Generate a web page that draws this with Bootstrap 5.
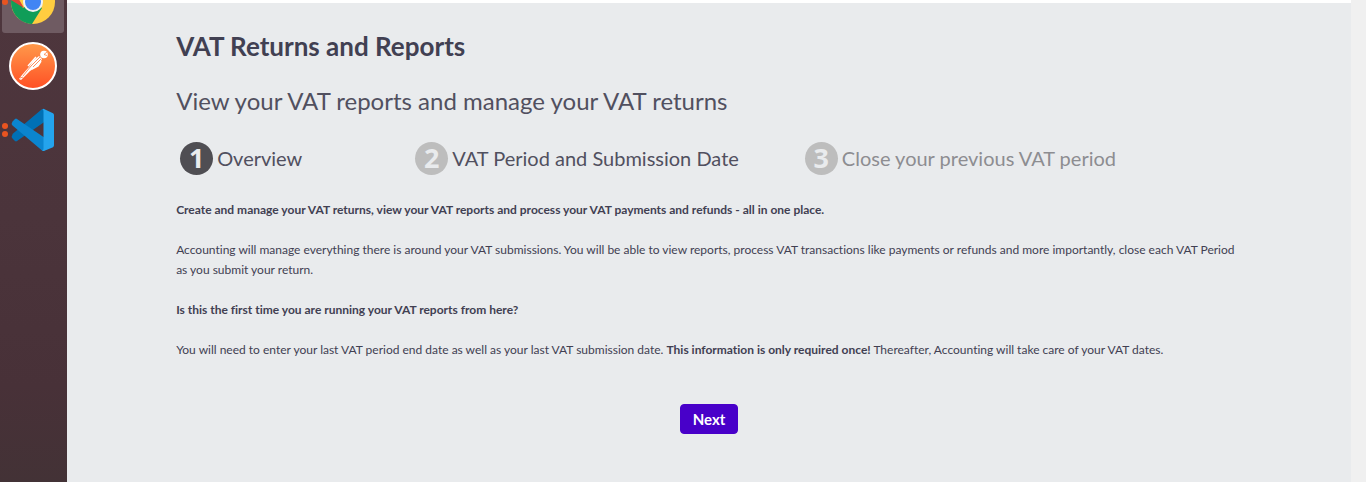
<!DOCTYPE html>
<html lang="en">
<head>
<meta charset="utf-8">
<meta name="viewport" content="width=device-width, initial-scale=1">
<title>VAT Returns and Reports</title>
<link href="https://cdn.jsdelivr.net/npm/bootstrap@5.3.0/dist/css/bootstrap.min.css" rel="stylesheet">
<script src="https://cdn.jsdelivr.net/npm/bootstrap@5.3.0/dist/js/bootstrap.bundle.min.js" defer></script>
<style>
body { font-family: Lato, "Liberation Sans", sans-serif; font-size: 12px; line-height: 20px; font-variant-ligatures: none; color: #414052; background: #e9ebed; }
.dock { width: 67px; background: linear-gradient(#4e363d, #4b343b 45%, #483138 80%, #433236); }
.dock button { display: block; width: 67px; padding: 0; border: 0; background: none; }
.dock svg { display: block; }
.page-area { border-top: 3px solid #fff; }
.wizard { width: 83%; padding-top: 27px; }
.gutter-strip { width: 15px; background: #f0f0f0; }
h1 { font-size: 26px; line-height: 32px; font-weight: 700; margin-bottom: 24px; }
h2 { font-size: 24px; line-height: 30px; font-weight: 400; color: #51505f; margin-bottom: 24px; }
.steps { font-size: 20px; line-height: 36px; color: #51505f; gap: 66px; padding-left: 4px; margin-bottom: 24px; }
.steps li { gap: 4px; }
.step-no { width: 33px; height: 33px; background: #bdbdbd; color: #e9ebed; font: 700 27px/31px "Open Sans", "Noto Sans", sans-serif; }
.current .step-no { background: #4f4e53; }
.current { margin-right: 47px; }
.later { color: #8d8d91; }
.wizard p { margin-bottom: 20px; }
.btn-next { --bs-btn-color: #fff; --bs-btn-bg: #4800c9; --bs-btn-border-color: #4800c9; --bs-btn-hover-color: #fff; --bs-btn-hover-bg: #3b00a6; --bs-btn-padding-x: 12px; --bs-btn-padding-y: 4px; --bs-btn-font-size: 15px; --bs-btn-line-height: 20px; --bs-btn-font-weight: 700; --bs-btn-border-radius: 4px; margin-top: 24px; }
</style>
</head>
<body>
<div class="d-flex min-vh-100">
  <nav class="dock flex-shrink-0" aria-label="Applications">
    <button type="button" aria-label="Chrome">
      <svg width="67" height="34" viewBox="0 0 67 34">
        <rect x="2" y="-20" width="62" height="53" rx="3" fill="#6f5b62"/>
        <circle cx="33" cy="2" r="22" fill="#ffcd40"/>
        <path d="M33 2 23 8 14 -9A22 22 0 0 0 32 24L42 8Z" fill="#109d58"/>
        <path d="M11 0A22 22 0 0 1 14 -9L24 8Z" fill="#db4437"/>
        <circle cx="33" cy="2" r="10" fill="#f1f1f1"/>
        <circle cx="33" cy="2" r="8" fill="#4285f4"/>
        <circle cx="5" cy="2" r="3" fill="#e95420"/>
      </svg>
    </button>
    <button type="button" aria-label="Postman">
      <svg width="67" height="64" viewBox="0 34 67 64">
        <defs><linearGradient id="orange" x1="0" y1="0" x2="0" y2="1"><stop offset="0" stop-color="#ff9a4b"/><stop offset="1" stop-color="#ff4f24"/></linearGradient></defs>
        <circle cx="33" cy="66" r="23" fill="url(#orange)" stroke="#fff" stroke-width="2"/>
        <circle cx="44" cy="54.500" r="3.800" fill="#fff"/>
        <path d="M44 54.500 47 52M44 54.500l3 1" stroke="#ff8240" stroke-width=".8"/>
        <path d="m39 56 3 3-3 6-9 6-9 9-2-1 3-4 7-8 4-6Z" fill="#fff"/>
        <path d="m40 57-9 9-8 10M41 59l-8 8M36 57l-8 8M20 78l3-1" fill="none" stroke="#ff7338" stroke-width=".8"/>
        <path d="m36 57-8 9M41 61l-3 5-6 3" fill="none" stroke="#fff" stroke-width="1.500"/>
      </svg>
    </button>
    <button type="button" aria-label="Visual Studio Code">
      <svg width="67" height="64" viewBox="0 98 67 64">
        <path d="m12.500 134 29-24.500q1.500-.8 3.500 0v12L17 141q-1 .8-2 0l-2.500-2.500q-1.500-2 0-4Z" fill="#0070b5"/>
        <path d="m12.500 125.500 29.500 25q1.500.8 3-.5v-12L17 119q-1-.8-2 0l-2.500 2.500q-1.500 2 0 4Z" fill="#0b85cf"/>
        <path d="M42.500 109.200q.8-.7 2 0l8.500 4q1 .6 1 2v30q0 1.200-1 2l-8.500 3.600q-1.200.6-2.500-.1 1.500-.2 1.500-2.200v-37q0-1.800-1-2.300Z" fill="#24a4ed"/>
        <circle cx="5" cy="126" r="3" fill="#e95420"/><circle cx="5" cy="134" r="3" fill="#e95420"/>
      </svg>
    </button>
  </nav>
  <main class="page-area flex-grow-1">
    <div class="wizard mx-auto">
      <h1>VAT Returns and Reports</h1>
      <h2>View your VAT reports and manage your VAT returns</h2>
      <ol class="steps list-unstyled d-flex">
        <li class="current d-flex align-items-center"><span class="step-no rounded-circle text-center">1</span>Overview</li>
        <li class="d-flex align-items-center"><span class="step-no rounded-circle text-center">2</span>VAT Period and Submission Date</li>
        <li class="later d-flex align-items-center"><span class="step-no rounded-circle text-center">3</span>Close your previous VAT period</li>
      </ol>
      <p class="fw-bold">Create and manage your VAT returns, view your VAT reports and process your VAT payments and refunds - all in one place.</p>
      <p>Accounting will manage everything there is around your VAT submissions. You will be able to view reports, process VAT transactions like payments or refunds and more importantly, close each VAT Period as you submit your return.</p>
      <p class="fw-bold">Is this the first time you are running your VAT reports from here?</p>
      <p>You will need to enter your last VAT period end date as well as your last VAT submission date. <strong>This information is only required once!</strong> Thereafter, Accounting will take care of your VAT dates.</p>
      <div class="text-center"><button type="button" class="btn btn-next">Next</button></div>
    </div>
  </main>
  <div class="gutter-strip flex-shrink-0"></div>
</div>
</body>
</html>
